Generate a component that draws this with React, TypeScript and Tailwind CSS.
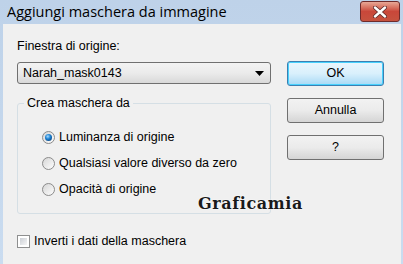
import React from "react";

function Radio({ checked }: { checked?: boolean }) {
  return (
    <svg width="13" height="13" viewBox="0 0 13 13" className="shrink-0">
      <defs>
        <linearGradient id="rb" x1="0" y1="0" x2="1" y2="1">
          <stop offset="0" stopColor="#d4d4d4" />
          <stop offset="1" stopColor="#ffffff" />
        </linearGradient>
        <radialGradient id="rd" cx="0.4" cy="0.35" r="0.7">
          <stop offset="0" stopColor="#a8dcff" />
          <stop offset="0.5" stopColor="#1f84d4" />
          <stop offset="1" stopColor="#0b4a8a" />
        </radialGradient>
      </defs>
      <circle cx="6.5" cy="6.5" r="6" fill="url(#rb)" stroke="#8a8a8a" strokeWidth="1" />
      {checked && <circle cx="6.5" cy="6.5" r="3.5" fill="url(#rd)" />}
    </svg>
  );
}

export default function App() {
  const font = { fontFamily: '"Liberation Sans", Arial, sans-serif' };
  return (
    <div className="w-[403px] h-[264px] flex flex-col bg-gradient-to-b from-[#bed2e9] to-[#cadcf0] overflow-hidden" style={font}>
      <div className="h-[24px] flex items-start shrink-0">
        <div
          className="ml-[7px] mt-[2px] text-[14.5px] leading-[20px] text-black"
          style={{ fontFamily: '"Open Sans", "Noto Sans", sans-serif' }}
        >
          Aggiungi maschera da immagine
        </div>
        <div className="ml-auto mr-[3px] mt-px w-[40px] h-[21px] rounded-[3px] border border-[#6e2b2b] bg-gradient-to-b from-[#e7a796] via-[#c9473a] to-[#c6523f] flex items-center justify-center">
          <svg width="14" height="12" viewBox="0 0 14 12">
            <path d="M2 1.5 L12 10.5 M12 1.5 L2 10.5" stroke="#5a2a2a" strokeWidth="4" strokeLinecap="round" />
            <path d="M2 1.5 L12 10.5 M12 1.5 L2 10.5" stroke="#ffffff" strokeWidth="2.4" strokeLinecap="round" />
          </svg>
        </div>
      </div>
      <div className="flex-1 ml-[3px] mr-[2px] bg-[#f0f0f0] relative flex text-[12.5px] text-black">
        <div className="ml-[14px] w-[254px] flex flex-col">
          <div className="mt-[15px] leading-[15px]">Finestra di origine:</div>
          <div className="mt-[8px] h-[22px] rounded-[3px] border border-[#707070] bg-gradient-to-b from-[#f3f3f3] via-[#ebebeb] to-[#d9d9d9] flex items-center pl-[5px] pr-[6px]">
            <span>Narah_mask0143</span>
            <svg className="ml-auto" width="9" height="5" viewBox="0 0 9 5">
              <path d="M0 0 H9 L4.5 5 Z" fill="#000" />
            </svg>
          </div>
          <div className="mt-[19px] h-[111px] relative border border-[#d5dfe5] rounded-[3px]">
            <div className="absolute -top-[8px] left-[6px] px-[3px] bg-[#f0f0f0] leading-[15px]">Crea maschera da</div>
            <div className="flex flex-col mt-[27px] ml-[24px] gap-[13px]">
              <div className="flex items-center gap-[4px] leading-[13px]">
                <Radio checked />
                <span>Luminanza di origine</span>
              </div>
              <div className="flex items-center gap-[4px] leading-[13px]">
                <Radio />
                <span>Qualsiasi valore diverso da zero</span>
              </div>
              <div className="flex items-center gap-[4px] leading-[13px]">
                <Radio />
                <span>Opacità di origine</span>
              </div>
            </div>
          </div>
          <div className="mt-[20px] flex items-center gap-[4px]">
            <div className="w-[13px] h-[13px] border border-[#8e8f8f] bg-white p-[2px]">
              <div className="w-full h-full bg-gradient-to-br from-[#cbcfd5] to-[#f6f6f6]" />
            </div>
            <span className="leading-[14px]">Inverti i dati della maschera</span>
          </div>
        </div>
        <div className="ml-[16px] mt-[37px] w-[97px] flex flex-col gap-[12px]">
          <div className="h-[25px] rounded-[3px] border border-[#3c7fb1] bg-gradient-to-b from-[#eaf6fd] via-[#d9f0fc] to-[#a7d9f5] flex items-center justify-center shadow-[inset_0_0_0_1px_#48d1fd]">
            OK
          </div>
          <div className="h-[25px] rounded-[3px] border border-[#707070] bg-gradient-to-b from-[#f2f2f2] via-[#ebebeb] to-[#d5d5d5] flex items-center justify-center">
            Annulla
          </div>
          <div className="h-[25px] rounded-[3px] border border-[#707070] bg-gradient-to-b from-[#f2f2f2] via-[#ebebeb] to-[#d5d5d5] flex items-center justify-center">
            ?
          </div>
        </div>
        <div
          className="absolute left-[195px] top-[171px] text-[16px] font-bold text-[#1a1a1a] leading-[18px] tracking-[0.6px]"
          style={{ fontFamily: '"DejaVu Serif", serif', textShadow: "0 0 2px #ffffff" }}
        >
          Graficamia
        </div>
      </div>
    </div>
  );
}
